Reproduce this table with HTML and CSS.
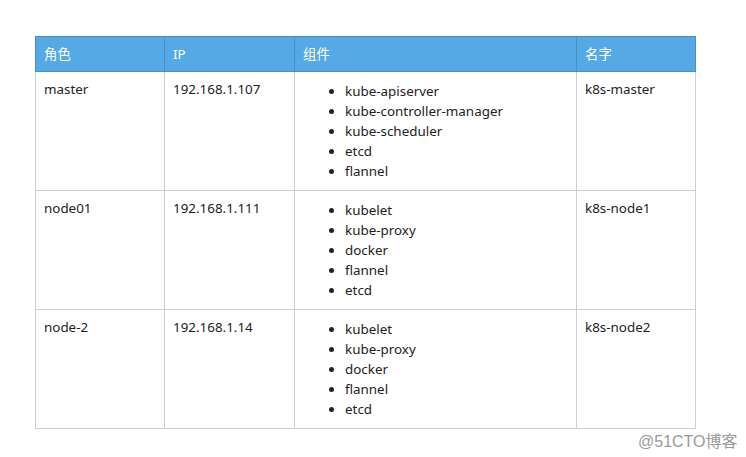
FILE: index.html
```html
<!DOCTYPE html>
<html>
<head>
<meta charset="utf-8">
<link rel="stylesheet" href="styles.css">
</head>
<body>
<table class="tbl">
  <thead>
    <tr><th class="c1">角色</th><th class="c2">IP</th><th class="c3">组件</th><th class="c4">名字</th></tr>
  </thead>
  <tbody>
    <tr>
      <td>master</td><td>192.168.1.107</td>
      <td><ul><li>kube-apiserver</li><li>kube-controller-manager</li><li>kube-scheduler</li><li>etcd</li><li>flannel</li></ul></td>
      <td>k8s-master</td>
    </tr>
    <tr>
      <td>node01</td><td>192.168.1.111</td>
      <td><ul><li>kubelet</li><li>kube-proxy</li><li>docker</li><li>flannel</li><li>etcd</li></ul></td>
      <td>k8s-node1</td>
    </tr>
    <tr>
      <td>node-2</td><td>192.168.1.14</td>
      <td><ul><li>kubelet</li><li>kube-proxy</li><li>docker</li><li>flannel</li><li>etcd</li></ul></td>
      <td>k8s-node2</td>
    </tr>
  </tbody>
</table>
<div class="mark">@51CTO博客</div>
</body>
</html>
```
FILE: styles.css
```css
html, body { margin: 0; padding: 0; background: #fff; }
body {
  padding: 36px 0 0 35px;
  font-family: "Noto Sans", "Noto Sans CJK SC", sans-serif;
  font-size: 13.4px;
  color: #222;
  position: relative;
  width: 746px;
  height: 457px;
  box-sizing: border-box;
}
.tbl {
  border-collapse: collapse;
  width: 661px;
  table-layout: fixed;
}
.c1 { width: 129px; }
.c2 { width: 130px; }
.c3 { width: 282px; }
.c4 { width: 119px; }
th {
  background: #55a9e5;
  color: #fff;
  font-weight: normal;
  text-align: left;
  height: 35px;
  box-sizing: border-box;
  padding: 0 8px;
  border: 1px solid #4a8fc6;
  line-height: 20px;
}
td {
  border: 1px solid #cfcfcf;
  vertical-align: top;
  padding: 7px 8px 9px 8px;
  line-height: 20px;
}
ul {
  margin: 2px 0 0 0;
  padding-left: 42px;
}
li { line-height: 20px; }
.mark {
  position: absolute;
  left: 638px;
  top: 428px;
  font-size: 16px;
  color: #9a9a9a;
  font-family: "Liberation Sans", "Noto Sans CJK SC", sans-serif;
}
```
